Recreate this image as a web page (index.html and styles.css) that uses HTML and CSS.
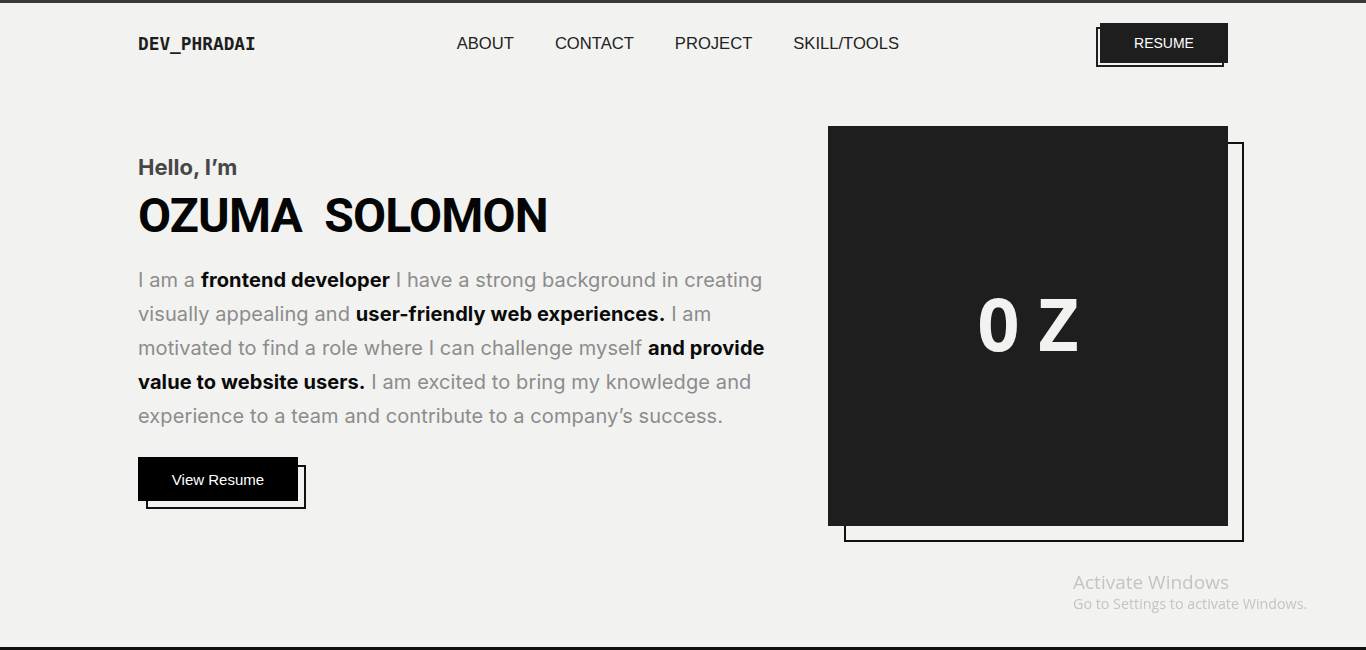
FILE: index.html
```html
<!DOCTYPE html>
<html lang="en">
<head>
<meta charset="utf-8">
<title>Dev Phradai</title>
<link rel="stylesheet" href="styles.css">
</head>
<body>
<div class="page">
  <header class="header">
    <div class="logo">DEV_PHRADAI</div>
    <nav class="nav">
      <a href="#">ABOUT</a>
      <a href="#">CONTACT</a>
      <a href="#">PROJECT</a>
      <a href="#">SKILL/TOOLS</a>
    </nav>
    <a class="btn btn-resume" href="#"><span>RESUME</span></a>
  </header>
  <main class="hero">
    <div class="intro">
      <p class="hello">Hello, I’m</p>
      <h1 class="name">OZUMA&nbsp; SOLOMON</h1>
      <p class="about">I am a <b>frontend developer</b> I have a strong background in creating visually appealing and <b>user-friendly web experiences.</b> I am motivated to find a role where I can challenge myself <b>and provide value to website users.</b> I am excited to bring my knowledge and experience to a team and contribute to a company’s success.</p>
      <a class="btn btn-view" href="#"><span>View Resume</span></a>
    </div>
    <div class="avatar">
      <div class="avatar-box">OZ</div>
    </div>
  </main>
</div>
<div class="watermark">
  <div class="wm-title">Activate Windows</div>
  <div class="wm-sub">Go to Settings to activate Windows.</div>
</div>
</body>
</html>
```
FILE: styles.css
```css
*, *::before, *::after { box-sizing: border-box; }
html, body { margin: 0; padding: 0; }
body {
  background: #f2f2f0;
  font-family: "Inter", "Liberation Sans", sans-serif;
  color: #111;
}
.page {
  height: 650px;
  border-top: 3px solid #3a3a3a;
  border-bottom: 3px solid #111;
  overflow: hidden;
}
.header {
  width: 1090px;
  margin: 0 auto;
  height: 80px;
  padding-top: 20px;
  display: flex;
  align-items: flex-start;
  justify-content: space-between;
}
.logo {
  font-family: "DejaVu Sans Mono", monospace;
  font-weight: bold;
  font-size: 17.8px;
  color: #1e1e1e;
  margin-top: 10px;
}
.nav {
  display: flex;
  gap: 41px;
  margin-top: 11px;
}
.nav a {
  font-family: "Liberation Sans", Arial, sans-serif;
  font-size: 16.6px;
  color: #222;
  text-decoration: none;
}
.btn {
  position: relative;
  display: flex;
  align-items: center;
  justify-content: center;
  text-decoration: none;
  color: #fff;
  font-family: "Liberation Sans", Arial, sans-serif;
}
.btn span { position: relative; z-index: 1; }
.btn::before {
  content: "";
  position: absolute;
  inset: 0;
  z-index: 1;
}
.btn::after {
  content: "";
  position: absolute;
  inset: 0;
  border: 2px solid #111;
}
.btn-resume {
  width: 128px;
  height: 40px;
  font-size: 14px;
}
.btn-resume::before { background: #1e1e1e; }
.btn-resume::after { transform: translate(-4px, 4px); border-color: #1e1e1e; }
.hero {
  width: 1090px;
  margin: 43px auto 0;
  display: flex;
  justify-content: space-between;
  align-items: flex-start;
}
.intro {
  width: 645px;
  padding-top: 26px;
}
.hello {
  margin: 0;
  font-size: 22px;
  font-weight: 700;
  color: #474747;
  line-height: 30px;
}
.name {
  margin: 6px 0 0;
  font-family: "Roboto", "Liberation Sans", sans-serif;
  font-size: 48px;
  font-weight: 700;
  letter-spacing: -0.8px;
  color: #050505;
  line-height: 56px;
}
.about {
  margin: 19px 0 0;
  font-size: 20px;
  letter-spacing: 0.1px;
  line-height: 34px;
  color: #8c8c8c;
}
.about b { color: #0a0a0a; font-weight: 700; }
.btn-view {
  width: 160px;
  height: 44px;
  margin-top: 24px;
  font-size: 15px;
}
.btn-view::before { background: #000; }
.btn-view::after { transform: translate(8px, 8px); }
.avatar {
  position: relative;
  width: 400px;
  height: 416px;
}
.avatar::after {
  content: "";
  position: absolute;
  left: 16px;
  top: 16px;
  width: 400px;
  height: 400px;
  border: 2px solid #111;
}
.avatar-box {
  position: relative;
  z-index: 1;
  width: 400px;
  height: 400px;
  background: #1e1e1e;
  color: #f2f2f0;
  display: flex;
  align-items: center;
  justify-content: center;
  font-family: "DejaVu Sans Mono", monospace;
  font-size: 72px;
  font-weight: 700;
  letter-spacing: 16px;
  padding-left: 16px;
}
.watermark {
  position: fixed;
  left: 1073px;
  top: 570px;
  color: #c4c4c4;
  font-family: "Open Sans", "Noto Sans", sans-serif;
}
.wm-title { font-size: 19px; line-height: 24px; }
.wm-sub { font-size: 14.3px; line-height: 20px; }
```
